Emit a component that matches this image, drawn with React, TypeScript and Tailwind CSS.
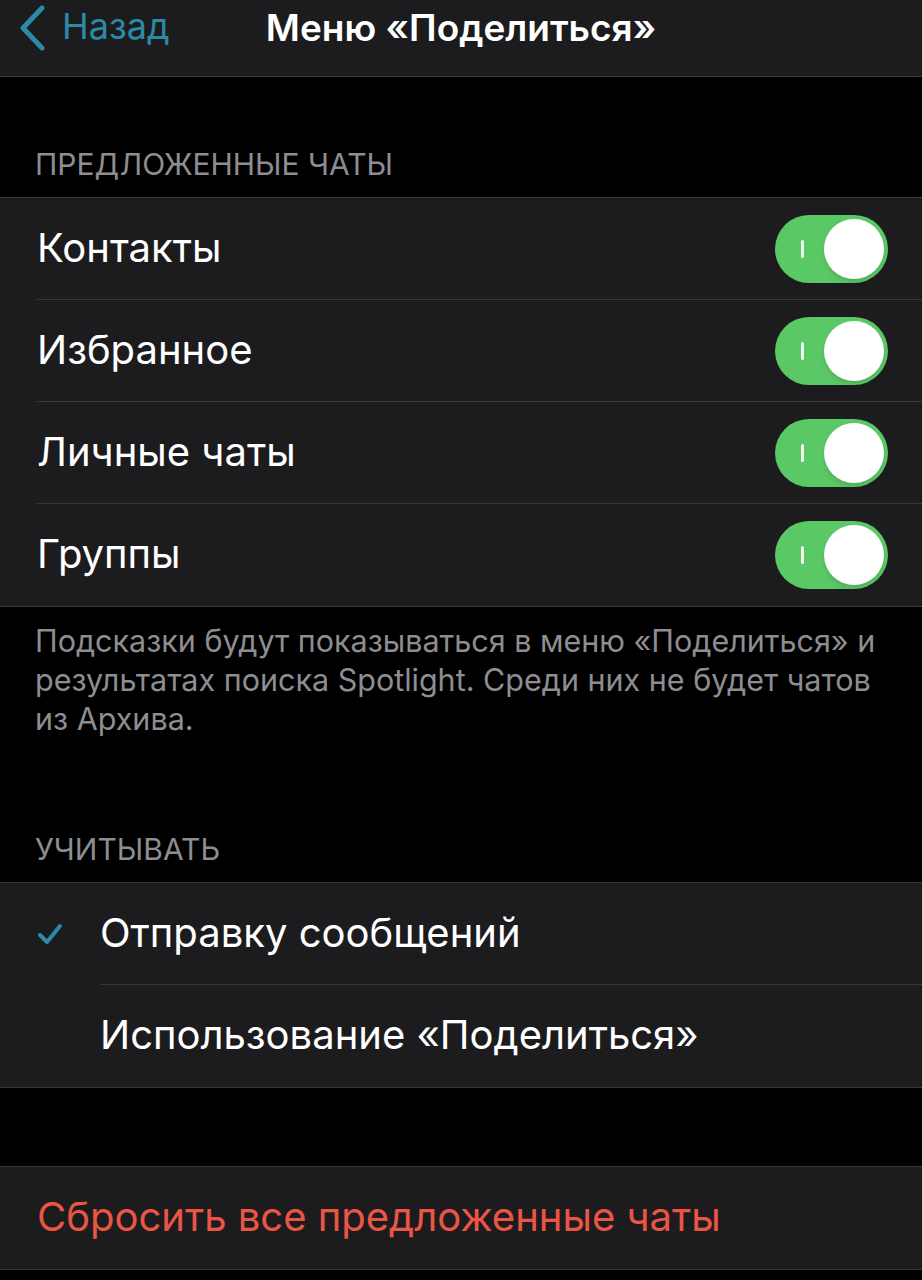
import { useState } from 'react';

const font = { fontFamily: 'Inter, "Noto Sans", sans-serif' };

function Toggle({ on, onChange }: { on: boolean; onChange: () => void }) {
  return (
    <button
      onClick={onChange}
      className={`relative w-[113px] h-[68px] rounded-full shrink-0 ${on ? 'bg-[#5bc866]' : 'bg-[#39393d]'}`}
    >
      {on && <span className="absolute left-[26px] top-[25px] w-[3px] h-[18px] bg-white/90 rounded" />}
      <span
        className={`absolute top-[4px] w-[60px] h-[60px] rounded-full bg-white shadow-md ${on ? 'left-[49px]' : 'left-[4px]'}`}
      />
    </button>
  );
}

export default function App() {
  const [toggles, setToggles] = useState([true, true, true, true]);
  const [mode, setMode] = useState(0);
  const rows = ['Контакты', 'Избранное', 'Личные чаты', 'Группы'];

  return (
    <div className="min-h-screen w-[922px] bg-black text-white" style={font}>
      {/* Навбар */}
      <div className="relative h-[77px] bg-[#1c1c1e] border-b border-[#38383a] flex items-center">
        <div className="flex items-center pl-[18px] text-[#2b8aa6] -mt-[20px]">
          <svg width="28" height="46" viewBox="0 0 28 46" fill="none">
            <path d="M24 3 L5 23 L24 43" stroke="currentColor" strokeWidth="5" strokeLinecap="round" strokeLinejoin="round" />
          </svg>
          <span className="ml-[16px] text-[36px] leading-none -mt-[4px]">Назад</span>
        </div>
        <div className="absolute left-0 right-0 top-[9px] text-center text-[37px] font-semibold leading-none pointer-events-none">
          Меню «Поделиться»
        </div>
      </div>

      {/* Предложенные чаты */}
      <div className="h-[120px] flex items-end px-[35px] pb-[18px] text-[30px] text-[#8d8d92] leading-none">
        ПРЕДЛОЖЕННЫЕ ЧАТЫ
      </div>
      <div className="bg-[#1c1c1e] border-y border-[#38383a]">
        {rows.map((r, i) => (
          <div key={r} className="pl-[37px]">
            <div className={`h-[102px] flex items-center justify-between pr-[34px] ${i < rows.length - 1 ? 'border-b border-[#38383a]' : ''}`}>
              <span className="text-[40px] leading-none -mt-[2px]">{r}</span>
              <Toggle on={toggles[i]} onChange={() => setToggles(t => t.map((v, j) => (j === i ? !v : v)))} />
            </div>
          </div>
        ))}
      </div>
      <div className="pl-[35px] pr-[12px] pt-[14px] text-[30.5px] leading-[39px] text-[#8d8d92]">
        Подсказки будут показываться в меню «Поделиться» и результатах поиска Spotlight. Среди них не будет чатов из Архива.
      </div>

      {/* Учитывать */}
      <div className="h-[144px] flex items-end px-[35px] pb-[18px] text-[30px] text-[#8d8d92] leading-none">
        УЧИТЫВАТЬ
      </div>
      <div className="bg-[#1c1c1e] border-y border-[#38383a]">
        {['Отправку сообщений', 'Использование «Поделиться»'].map((r, i) => (
          <div key={r} className="flex items-center cursor-pointer" onClick={() => setMode(i)}>
            <div className="w-[100px] pl-[37px] flex items-center">
              {mode === i && (
                <svg width="26" height="22" viewBox="0 0 26 22" fill="none">
                  <path d="M3 12 L10 19 L23 3" stroke="#2b8aa6" strokeWidth="4" strokeLinecap="round" strokeLinejoin="round" />
                </svg>
              )}
            </div>
            <div className={`flex-1 h-[102px] flex items-center ${i === 0 ? 'border-b border-[#38383a]' : ''}`}>
              <span className="text-[40px] leading-none -mt-[2px]">{r}</span>
            </div>
          </div>
        ))}
      </div>

      <div className="h-[78px]" />
      <div className="bg-[#1c1c1e] border-y border-[#38383a] h-[104px] flex items-center pl-[37px]">
        <span className="text-[40px] leading-none text-[#eb5545] -mt-[2px]">Сбросить все предложенные чаты</span>
      </div>
    </div>
  );
}
